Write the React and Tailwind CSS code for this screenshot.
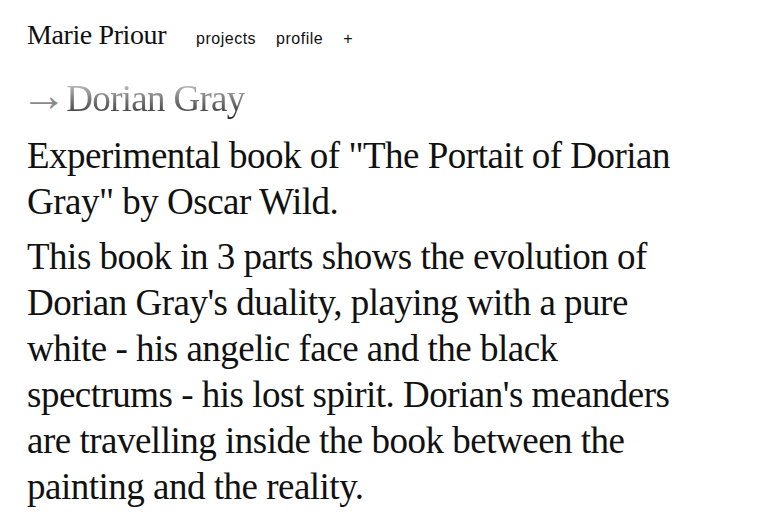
import React from 'react';

const intro = ['Experimental book of "The Portait of Dorian', 'Gray" by Oscar Wild.'];
const body = [
    'This book in 3 parts shows the evolution of',
    "Dorian Gray's duality, playing with a pure",
    'white - his angelic face and the black',
    "spectrums - his lost spirit. Dorian's meanders",
    'are travelling inside the book between the',
    'painting and the reality.',
];

function Header() {
    return (
        <header className="flex items-baseline pt-[20px]">
            <a href="#" className="text-[28px] leading-[30px] text-[#111] tracking-[-0.4px] font-['Liberation_Serif',serif]">Marie Priour</a>
            <nav className="flex items-baseline gap-[20px] ml-[30px] text-[16px] tracking-[0.5px] text-[#111] font-['Liberation_Sans',sans-serif]">
                <a href="#">projects</a>
                <a href="#">profile</a>
                <button className="px-0">+</button>
            </nav>
        </header>
    );
}

function Lines({ lines }) {
    return lines.map((l) => (
        <span key={l} className="block whitespace-nowrap">{l}</span>
    ));
}

export default function App() {
    return (
        <div className="bg-white min-h-[519px] px-[27px] overflow-hidden">
            <Header />
            <h1 className="mt-[24px] flex items-baseline text-[37px] leading-[42px] font-['Liberation_Serif',serif] tracking-[-0.7px]">
                <span className="text-[#8a8a8a] text-[46px] leading-[42px] -ml-[6px]">→</span>
                <span className="bg-gradient-to-b from-[#dadada] to-[#2a2a2a] bg-clip-text text-transparent">Dorian Gray</span>
            </h1>
            <div className="mt-[13px] text-[37px] leading-[46px] text-[#111] font-['Liberation_Serif',serif] tracking-[-0.5px]">
                <p><Lines lines={intro} /></p>
                <p className="mt-[9px]"><Lines lines={body} /></p>
            </div>
        </div>
    );
}
